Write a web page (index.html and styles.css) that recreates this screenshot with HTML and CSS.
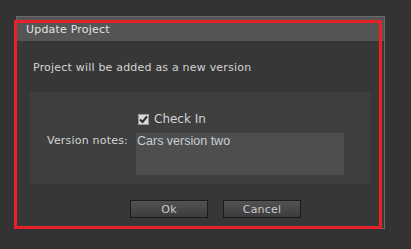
FILE: index.html
```html
<!DOCTYPE html>
<html lang="en">
<head>
    <meta charset="UTF-8">
    <meta name="viewport" content="width=device-width, initial-scale=1.0">
    <title>Update Project</title>
    <link rel="stylesheet" href="styles.css">
</head>
<body>
<div class="dialog">
    <div class="title-bar">Update Project</div>
    <div class="dialog-body">
        <p class="message">Project will be added as a new version</p>
        <div class="group">
            <div class="form-grid">
                <span></span>
                <label class="check-row">
                    <span class="check-box">
                        <svg width="9" height="9" viewBox="0 0 9 9">
                            <path d="M1 4.5 L3.5 7 L8 1.5" fill="none" stroke="#2e2e2e" stroke-width="2"/>
                        </svg>
                    </span>
                    Check In
                </label>
                <span class="field-label">Version notes:</span>
                <div class="notes">Cars version two</div>
            </div>
        </div>
        <div class="button-row">
            <button class="dlg-button">Ok</button>
            <button class="dlg-button">Cancel</button>
        </div>
    </div>
    <div class="highlight"></div>
</div>
</body>
</html>
```

FILE: styles.css
```css
body {
    background-color: #333333;
    font-family: "DejaVu Sans", Verdana, sans-serif;
    font-size: 11px;
    letter-spacing: 0.2px;
    color: #d4d4d4;
    margin: 0;
    padding: 16px 0 0 16px;
}

.dialog {
    position: relative;
    width: 367px;
    height: 211px;
    border: 1px solid #6b6b6b;
    background-color: #373737;
}

.title-bar {
    height: 24px;
    line-height: 25px;
    padding-left: 9px;
    background-color: #555555;
    color: #e2e2e2;
}

.dialog-body {
    padding: 0 14px 0 13px;
}

.message {
    margin: 0;
    padding: 20px 0 0 3px;
    height: 31px;
    box-sizing: border-box;
    line-height: 14px;
}

.group {
    background-color: #3f3f3f;
    height: 92px;
    margin-top: 20px;
    box-sizing: border-box;
    padding-top: 21px;
}

.form-grid {
    display: grid;
    grid-template-columns: 98px 208px;
    column-gap: 8px;
    row-gap: 8px;
    align-items: start;
}

.check-row {
    display: flex;
    align-items: center;
    gap: 5px;
    margin-left: 2px;
    height: 12px;
    font-size: 12px;
    letter-spacing: 0;
}

.check-box {
    display: flex;
    align-items: center;
    justify-content: center;
    width: 11px;
    height: 11px;
    box-sizing: border-box;
    background-color: #d6d6d6;
    border: 1px solid #9a9a9a;
}

.field-label {
    text-align: right;
    line-height: 14px;
    padding-top: 1px;
}

.notes {
    height: 42px;
    background-color: #4e4e4e;
    color: #c6ced6;
    font-family: "Liberation Sans", Arial, sans-serif;
    font-size: 12.5px;
    letter-spacing: 0;
    line-height: 14px;
    padding: 1px 1px;
    box-sizing: border-box;
}

.button-row {
    display: flex;
    gap: 15px;
    margin-top: 16px;
    padding-left: 100px;
}

.dlg-button {
    width: 78px;
    height: 18px;
    padding: 0;
    border: 1px solid #1c1c1c;
    background: linear-gradient(#525252, #3c3c3c);
    color: #cacaca;
    font-family: "DejaVu Sans", Verdana, sans-serif;
    font-size: 11px;
    letter-spacing: 0.2px;
}

/* red annotation frame drawn over the dialog */
.highlight {
    position: absolute;
    left: -3px;
    top: 3px;
    width: 368px;
    height: 209px;
    box-sizing: border-box;
    border: 3px solid #e8202a;
    pointer-events: none;
}
```
